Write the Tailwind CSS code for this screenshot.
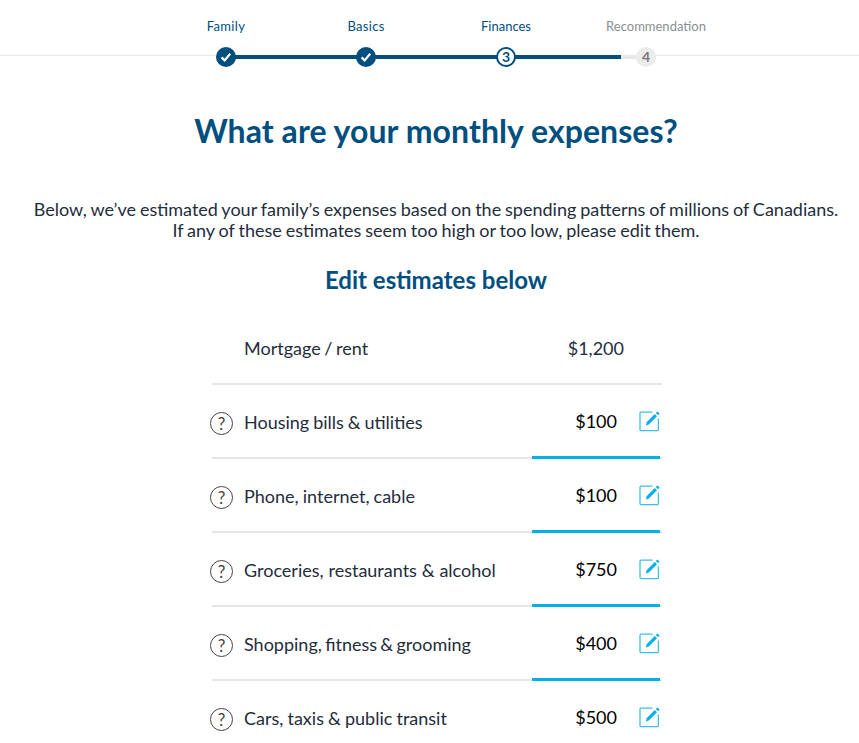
<!DOCTYPE html>
<html>
<head>
<meta charset="utf-8">
<script src="https://cdn.jsdelivr.net/npm/@tailwindcss/browser@4"></script>
</head>
<body class="bg-white overflow-hidden font-['Lato','Open_Sans',sans-serif] text-[#1f2d3d]">
<div class="w-[859px] h-[743px] overflow-hidden">
  <div class="relative h-[70px]">
    <div class="absolute left-0 right-0 top-[55px] h-px bg-[#e8e8e8]"></div>
    <div class="absolute left-[226px] w-[395px] top-[55px] h-[4px] bg-[#004f7f]"></div>
    <div class="absolute left-[621px] w-[25px] top-[55px] h-[4px] bg-[#e8e8e8]"></div>
    <div class="relative flex pl-[156px] pt-[18px]">
      <div class="w-[140px] flex flex-col items-center">
        <span class="text-[13px] leading-[16px] tracking-[0.3px] text-[#004f7f]">Family</span>
        <span class="mt-[13px] w-5 h-5 rounded-full bg-[#004f7f] flex items-center justify-center">
          <svg width="14" height="14" viewBox="0 0 14 14"><path d="M2.6 7.4 L5.6 10.4 L11.2 3.8" fill="none" stroke="#fff" stroke-width="2.2"/></svg>
        </span>
      </div>
      <div class="w-[140px] flex flex-col items-center">
        <span class="text-[13px] leading-[16px] tracking-[0.3px] text-[#004f7f]">Basics</span>
        <span class="mt-[13px] w-5 h-5 rounded-full bg-[#004f7f] flex items-center justify-center">
          <svg width="14" height="14" viewBox="0 0 14 14"><path d="M2.6 7.4 L5.6 10.4 L11.2 3.8" fill="none" stroke="#fff" stroke-width="2.2"/></svg>
        </span>
      </div>
      <div class="w-[140px] flex flex-col items-center">
        <span class="text-[13px] leading-[16px] text-[#004f7f]">Finances</span>
        <span class="mt-[13px] w-5 h-5 rounded-full bg-white border-[2px] border-[#004f7f] flex items-center justify-center text-[14px] font-bold text-[#004f7f] leading-none">3</span>
      </div>
      <div class="w-[140px] flex flex-col items-center">
        <span class="translate-x-[10px] text-[13px] leading-[16px] text-[#8a8f94]">Recommendation</span>
        <span class="mt-[13px] w-5 h-5 rounded-full bg-[#ebebeb] flex items-center justify-center text-[14px] font-bold text-[#77797c] leading-none">4</span>
      </div>
    </div>
  </div>

  <div class="w-[872px]">
    <h1 class="mt-[41px] text-center text-[32px] leading-[40px] font-bold tracking-[0.06px] text-[#004f7f]">What are your monthly expenses?</h1>
    <p class="mt-[48px] text-center text-[18px] leading-[21px] [word-spacing:-0.7px]">Below, we’ve estimated your family’s expenses based on the spending patterns of millions of Canadians.<br>If any of these estimates seem too high or too low, please edit them.</p>
    <h2 class="mt-[23px] text-center text-[24px] leading-[32px] font-bold text-[#004f7f]">Edit estimates below</h2>

    <div class="mt-[15px] ml-[212px] w-[450px] text-[18px] leading-[24px]">
      <div class="h-[74px] flex items-center border-b-2 border-[#e6e6e6] pl-[32px]">
        <span class="flex-1 translate-y-px [word-spacing:-1px]">Mortgage / rent</span>
        <span class="w-[60px] mr-[38px] translate-y-px text-right">$1,200</span>
      </div>

      <div class="relative h-[74px] flex items-center border-b-2 border-[#e6e6e6] pl-[32px]">
        <span class="absolute left-[-2px] top-[27px] w-[23px] h-[23px] rounded-full border border-[#444] flex items-center justify-center text-[17px] leading-none text-[#444]">?</span>
        <span class="flex-1 translate-y-px [word-spacing:-0.7px]">Housing bills &amp; utilities</span>
        <span class="text-black mr-[22px]">$100</span>
        <svg class="mr-[2px]" width="21" height="21" viewBox="0 0 21 21"><path d="M13.5 1.2 H2 Q1 1.2 1 2.2 V18.6 Q1 19.6 2 19.6 H18.4 Q19.4 19.6 19.4 18.6 V7.5" fill="none" stroke="#3cc0ea" stroke-width="1.3"/><path d="M7 14.5 L7.6 11.2 L15.8 3 L18 5.2 L9.8 13.4 Z M16.8 2 L18.4 .4 L20.6 2.6 L19 4.2 Z" fill="#00b0e6"/></svg>
        <span class="absolute right-[2px] bottom-[-2px] w-[128px] h-[3px] bg-[#00b0e6]"></span>
      </div>

      <div class="relative h-[74px] flex items-center border-b-2 border-[#e6e6e6] pl-[32px]">
        <span class="absolute left-[-2px] top-[27px] w-[23px] h-[23px] rounded-full border border-[#444] flex items-center justify-center text-[17px] leading-none text-[#444]">?</span>
        <span class="flex-1 translate-y-px [word-spacing:-0.5px]">Phone, internet, cable</span>
        <span class="text-black mr-[22px]">$100</span>
        <svg class="mr-[2px]" width="21" height="21" viewBox="0 0 21 21"><path d="M13.5 1.2 H2 Q1 1.2 1 2.2 V18.6 Q1 19.6 2 19.6 H18.4 Q19.4 19.6 19.4 18.6 V7.5" fill="none" stroke="#3cc0ea" stroke-width="1.3"/><path d="M7 14.5 L7.6 11.2 L15.8 3 L18 5.2 L9.8 13.4 Z M16.8 2 L18.4 .4 L20.6 2.6 L19 4.2 Z" fill="#00b0e6"/></svg>
        <span class="absolute right-[2px] bottom-[-2px] w-[128px] h-[3px] bg-[#00b0e6]"></span>
      </div>

      <div class="relative h-[74px] flex items-center border-b-2 border-[#e6e6e6] pl-[32px]">
        <span class="absolute left-[-2px] top-[27px] w-[23px] h-[23px] rounded-full border border-[#444] flex items-center justify-center text-[17px] leading-none text-[#444]">?</span>
        <span class="flex-1 translate-y-px [word-spacing:0.25px]">Groceries, restaurants &amp; alcohol</span>
        <span class="text-black mr-[22px]">$750</span>
        <svg class="mr-[2px]" width="21" height="21" viewBox="0 0 21 21"><path d="M13.5 1.2 H2 Q1 1.2 1 2.2 V18.6 Q1 19.6 2 19.6 H18.4 Q19.4 19.6 19.4 18.6 V7.5" fill="none" stroke="#3cc0ea" stroke-width="1.3"/><path d="M7 14.5 L7.6 11.2 L15.8 3 L18 5.2 L9.8 13.4 Z M16.8 2 L18.4 .4 L20.6 2.6 L19 4.2 Z" fill="#00b0e6"/></svg>
        <span class="absolute right-[2px] bottom-[-2px] w-[128px] h-[3px] bg-[#00b0e6]"></span>
      </div>

      <div class="relative h-[74px] flex items-center border-b-2 border-[#e6e6e6] pl-[32px]">
        <span class="absolute left-[-2px] top-[27px] w-[23px] h-[23px] rounded-full border border-[#444] flex items-center justify-center text-[17px] leading-none text-[#444]">?</span>
        <span class="flex-1 translate-y-px [word-spacing:-1.3px]">Shopping, fitness &amp; grooming</span>
        <span class="text-black mr-[22px]">$400</span>
        <svg class="mr-[2px]" width="21" height="21" viewBox="0 0 21 21"><path d="M13.5 1.2 H2 Q1 1.2 1 2.2 V18.6 Q1 19.6 2 19.6 H18.4 Q19.4 19.6 19.4 18.6 V7.5" fill="none" stroke="#3cc0ea" stroke-width="1.3"/><path d="M7 14.5 L7.6 11.2 L15.8 3 L18 5.2 L9.8 13.4 Z M16.8 2 L18.4 .4 L20.6 2.6 L19 4.2 Z" fill="#00b0e6"/></svg>
        <span class="absolute right-[2px] bottom-[-2px] w-[128px] h-[3px] bg-[#00b0e6]"></span>
      </div>

      <div class="relative h-[74px] flex items-center border-b-2 border-transparent pl-[32px]">
        <span class="absolute left-[-2px] top-[27px] w-[23px] h-[23px] rounded-full border border-[#444] flex items-center justify-center text-[17px] leading-none text-[#444]">?</span>
        <span class="flex-1 translate-y-px [word-spacing:-0.5px]">Cars, taxis &amp; public transit</span>
        <span class="text-black mr-[22px]">$500</span>
        <svg class="mr-[2px]" width="21" height="21" viewBox="0 0 21 21"><path d="M13.5 1.2 H2 Q1 1.2 1 2.2 V18.6 Q1 19.6 2 19.6 H18.4 Q19.4 19.6 19.4 18.6 V7.5" fill="none" stroke="#3cc0ea" stroke-width="1.3"/><path d="M7 14.5 L7.6 11.2 L15.8 3 L18 5.2 L9.8 13.4 Z M16.8 2 L18.4 .4 L20.6 2.6 L19 4.2 Z" fill="#00b0e6"/></svg>
      </div>
    </div>
  </div>
</div>
</body>
</html>
